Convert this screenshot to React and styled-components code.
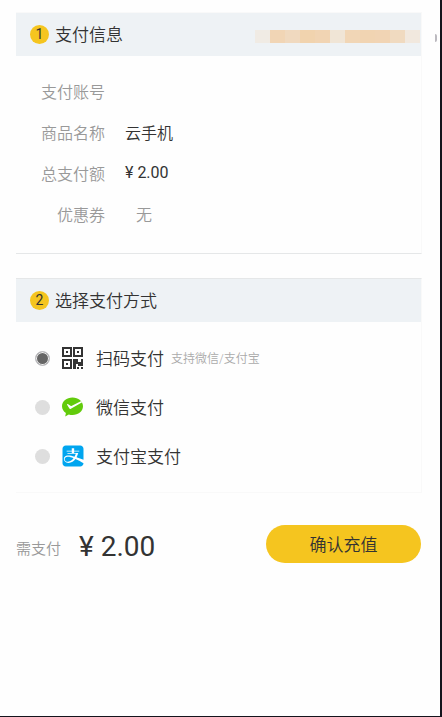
import { useState } from "react";
import styled, { createGlobalStyle } from "styled-components";
import { FaAlipay } from "react-icons/fa";

const colors = {
  primary: "#f5c51f",
  text: "#333",
  label: "#999",
  header: "#eef2f5",
  line: "#e5e7e8",
  edge: "#f9f9f9",
  wechat: "#62cb0b",
  alipay: "#00a5ef",
};

const GlobalStyle = createGlobalStyle`
  * {
    box-sizing: border-box;
  }
  body {
    margin: 0;
    background: #fefefe;
    color: ${colors.text};
    font-family: Roboto, "Noto Sans CJK SC", sans-serif;
    font-weight: 350;
  }
`;

const mosaic = [
  "#f0ebe4",
  "#f1d5b5",
  "#f0d9bf",
  "#f1d3ae",
  "#f1d4b3",
  "#f0e5d6",
  "#f1d6b6",
  "#f1d4b2",
  "#f1d4b4",
  "#f0dac0",
  "#f1e8de",
];

const QrIcon = () => (
  <svg width="22" height="22" viewBox="0 0 22 22" fill={colors.text}>
    <path
      fillRule="evenodd"
      d="M0 0h10v10H0zM2 2v6h6V2zM11 0h10v10H11zM13 2v6h6V2zM0 12h10v10H0zM2 14v6h6v-6z"
    />
    <path d="M4 4h2v2H4zM15 4h2v2h-2zM4 16h2v2H4z" />
    <path d="M11 12h5v3h3v-3h2v7h-5v-2h-2v5h-3zM15 20h2v2h-2zM19 20h2v2h-2z" />
  </svg>
);

const WechatIcon = () => (
  <svg width="22" height="22" viewBox="0 0 22 22">
    <path
      fill={colors.wechat}
      d="M10.500 1.500C4.700 1.500 0 5.400 0 10.300c0 2.800 1.500 5.200 3.900 6.800L3.200 20.600l3.600-2c1.200.4 2.400.5 3.700.5 5.800 0 10.500-3.900 10.500-8.800S16.300 1.500 10.500 1.500z"
    />
    <path
      fill="#fff"
      d="M20.200 6.200 8.900 12.700c-.7.4-1.300.2-1.700-.5L5.100 8.700c-.2-.6.2-.9.700-.6l2.300 1.500c.6.400 1.100.4 1.800.1L19.300 5z"
    />
  </svg>
);

const methods = [
  { id: "scan", name: "扫码支付", hint: "支持微信/支付宝", icon: <QrIcon /> },
  { id: "wechat", name: "微信支付", icon: <WechatIcon /> },
  {
    id: "alipay",
    name: "支付宝支付",
    icon: <FaAlipay size={24} color={colors.alipay} />,
  },
];

const SectionHeader = ({ step, title, children }) => (
  <Header>
    <Step>{step}</Step>
    <Title>{title}</Title>
    {children}
  </Header>
);

const App = () => {
  const [method, setMethod] = useState("scan");
  return (
    <Page>
      <GlobalStyle />
      <Section>
        <SectionHeader step={1} title="支付信息">
          <Mosaic>
            {mosaic.map((color, i) => (
              <Block key={i} $color={color} />
            ))}
          </Mosaic>
          <Mark />
        </SectionHeader>
        <InfoList>
          <dt>支付账号</dt>
          <dd />
          <dt>商品名称</dt>
          <dd>云手机</dd>
          <dt>总支付额</dt>
          <Amount>¥ 2.00</Amount>
          <dt>优惠券</dt>
          <Coupon>无</Coupon>
        </InfoList>
      </Section>
      <Section $soft>
        <SectionHeader step={2} title="选择支付方式" />
        <MethodList>
          {methods.map((e) => (
            <Method key={e.id}>
              <Radio
                name="method"
                value={e.id}
                checked={method === e.id}
                onChange={() => setMethod(e.id)}
              />
              <IconBox>{e.icon}</IconBox>
              <MethodName>{e.name}</MethodName>
              {e.hint && <Hint>{e.hint}</Hint>}
            </Method>
          ))}
        </MethodList>
      </Section>
      <Footer>
        <FooterLabel>需支付</FooterLabel>
        <Price>¥ 2.00</Price>
        <PayButton type="button">确认充值</PayButton>
      </Footer>
    </Page>
  );
};

export default App;

const Page = styled.main`
  display: flex;
  flex-direction: column;
  min-height: 100vh;
  padding: 12px 18px 16px 16px;
  border-right: 2px solid #14141c;
  border-bottom: 1px solid #14141c;
`;
const Section = styled.section`
  border: 1px solid ${colors.edge};
  border-width: 1px 1px 1px 0;
  border-bottom-color: ${({ $soft }) => ($soft ? colors.edge : colors.line)};
  border-top-color: ${({ $soft }) => ($soft ? colors.line : colors.edge)};
  & + & {
    margin-top: 24px;
  }
`;
const Header = styled.header`
  position: relative;
  display: flex;
  align-items: center;
  height: 43px;
  padding: 0 1px 0 14px;
  background: ${colors.header};
`;
const Step = styled.span`
  width: 19px;
  height: 19px;
  margin-right: 6px;
  border-radius: 50%;
  background: ${colors.primary};
  font-size: 14px;
  font-weight: 400;
  line-height: 19px;
  text-align: center;
`;
const Title = styled.h2`
  margin: 0;
  font-size: 17px;
  font-weight: 350;
  line-height: 24px;
`;
const Mosaic = styled.div`
  display: flex;
  margin-left: auto;
  padding-top: 4px;
`;
const Block = styled.span`
  width: 15px;
  height: 13px;
  background: ${({ $color }) => $color};
`;
const Mark = styled.span`
  position: absolute;
  top: 21px;
  right: -16px;
  width: 2px;
  height: 8px;
  border-radius: 0 2px 2px 0;
  background: #bbb9bf;
`;
const InfoList = styled.dl`
  display: grid;
  grid-template-columns: 64px 1fr;
  grid-auto-rows: 41px;
  column-gap: 20px;
  align-items: center;
  margin: 0;
  padding: 14px 0 19px 25px;
  font-size: 16px;
  dt {
    color: ${colors.label};
    text-align: right;
  }
  dd {
    margin: 0;
  }
`;
const Amount = styled.dd`
  font-weight: 400;
`;
const Coupon = styled.dd`
  && {
    padding-left: 11px;
    color: ${colors.label};
  }
`;
const MethodList = styled.div`
  padding: 12px 0 11px 19px;
`;
const Method = styled.label`
  display: flex;
  align-items: center;
  height: 49px;
`;
const Radio = styled.input.attrs({ type: "radio" })`
  appearance: none;
  width: 15px;
  height: 15px;
  margin: 0 12px 0 0;
  border-radius: 50%;
  background: #dedede;
  &:checked {
    border: 1px solid #c4c4c8;
    background: #666;
    box-shadow: inset 0 0 0 1px #f4f4f4;
  }
`;
const IconBox = styled.span`
  display: flex;
  justify-content: center;
  width: 22px;
  margin-right: 12px;
  padding-bottom: 2px;
  svg {
    flex: none;
  }
`;
const MethodName = styled.span`
  padding-bottom: 2px;
  font-size: 17px;
`;
const Hint = styled.small`
  margin-left: 7px;
  padding-bottom: 2px;
  color: #aaa;
  font-size: 12px;
`;
const Footer = styled.footer`
  display: flex;
  align-items: center;
  margin-top: 32px;
`;
const FooterLabel = styled.span`
  padding-top: 6px;
  color: ${colors.label};
  font-size: 15px;
`;
const Price = styled.strong`
  margin-left: 18px;
  padding-top: 4px;
  font-size: 28px;
  font-weight: 400;
`;
const PayButton = styled.button`
  width: 155px;
  height: 38px;
  margin: 0 1px 0 auto;
  padding: 0 0 2px;
  border: none;
  border-radius: 19px;
  background: ${colors.primary};
  color: ${colors.text};
  font: inherit;
  font-size: 17px;
`;
